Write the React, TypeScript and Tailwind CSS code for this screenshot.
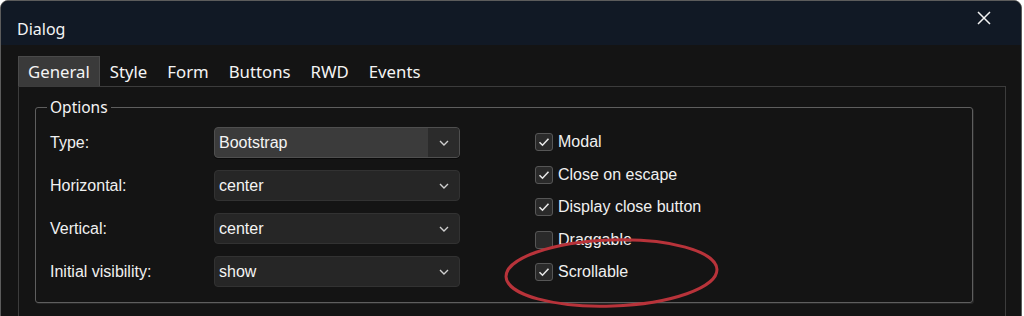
const tabs = ["General", "Style", "Form", "Buttons", "RWD", "Events"];

const selects = [
  { label: "Type:", value: "Bootstrap", focused: true },
  { label: "Horizontal:", value: "center" },
  { label: "Vertical:", value: "center" },
  { label: "Initial visibility:", value: "show" },
];

const options = [
  { label: "Modal", checked: true },
  { label: "Close on escape", checked: true },
  { label: "Display close button", checked: true },
  { label: "Draggable", checked: false },
  { label: "Scrollable", checked: true },
];

function Chevron() {
  return (
    <svg width="10" height="6" viewBox="0 0 10 6" fill="none">
      <path d="M1 1l4 4 4-4" stroke="#cfcfcf" strokeWidth="1.4" />
    </svg>
  );
}

function Select({ value, focused }: { value: string; focused?: boolean }) {
  if (focused) {
    return (
      <div className="flex h-[31px] w-[246px] overflow-hidden rounded-[4px] border border-[#4f4f4f] bg-[#3b3b3b] shadow-[0_1px_0_#0a0a0a]">
        <div className="flex flex-1 items-center pl-[4px] text-[#f4f4f4]">{value}</div>
        <div className="flex w-[31px] items-center justify-center bg-[#2b2b2b]">
          <Chevron />
        </div>
      </div>
    );
  }
  return (
    <div className="flex h-[31px] w-[246px] items-center justify-between rounded-[4px] border border-[#323232] bg-[#262626] pl-[4px] pr-[10px] text-[#f4f4f4]">
      <span>{value}</span>
      <Chevron />
    </div>
  );
}

function Checkbox({ checked }: { checked: boolean }) {
  return (
    <div className="flex h-[18px] w-[18px] items-center justify-center rounded-[3px] border border-[#565656] bg-[#2a2a2a]">
      {checked && (
        <svg width="12" height="10" viewBox="0 0 12 10" fill="none">
          <path d="M1.5 5.2l3 3 6-6.5" stroke="#e6e6e6" strokeWidth="1.6" />
        </svg>
      )}
    </div>
  );
}

export default function App() {
  return (
    <div className="relative h-[316px] overflow-hidden bg-white font-['Liberation_Sans',Arial,sans-serif] text-[16px]">
      {/* window */}
      <div className="flex h-[360px] w-[1022px] flex-col overflow-hidden rounded-t-[8px] border border-[#5c5c5c] bg-[#141414]">
        {/* title bar */}
        <div className="flex h-[44px] shrink-0 items-start justify-between bg-[#111925] pl-[16px] pr-[30px]">
          <span className="pt-[16px] font-['Noto_Sans',sans-serif] text-[16px] leading-[24px] text-[#f4f4f4]">Dialog</span>
          <svg className="mt-[10px]" width="14" height="14" viewBox="0 0 14 14" fill="none">
            <path d="M1 1l12 12M13 1L1 13" stroke="#f2f2f2" strokeWidth="1.5" />
          </svg>
        </div>

        {/* body */}
        <div className="flex flex-1 flex-col pl-[17px] pr-[15px] pt-[11px]">
          {/* tabs */}
          <div className="flex font-['Noto_Sans',sans-serif] text-[16.75px] text-[#f4f4f4]">
            {tabs.map((t, i) => (
              <div
                key={t}
                className={
                  i === 0
                    ? "h-[30px] border-x border-t border-[#4a4a4a] bg-[#3a3a3a] px-[9px] pt-[2px] leading-[26px]"
                    : "h-[30px] px-[10px] pt-[3px] leading-[26px]"
                }
              >
                {t}
              </div>
            ))}
          </div>

          {/* tab panel */}
          <div className="flex-1 border-x border-t border-[#3c3c3c]">
            <fieldset className="ml-[16px] mt-[11px] w-[938px] rounded-[3px] border border-[#5e5e5e] px-[14px] pb-[15px] pt-[11px] shadow-[1px_1px_0_#262626]">
              <legend className="-ml-[3px] px-[3px] font-['Noto_Sans',sans-serif] text-[15.5px] leading-[18px] text-[#f4f4f4]">
                Options
              </legend>
              <div className="flex text-[#f0f0f0]">
                <div className="flex flex-col gap-[12px]">
                  {selects.map((s) => (
                    <div key={s.label} className="flex h-[31px] items-center">
                      <span className="w-[164px]">{s.label}</span>
                      <Select value={s.value} focused={s.focused} />
                    </div>
                  ))}
                </div>
                <div className="ml-[75px] flex flex-col gap-[14.5px] pt-[6px]">
                  {options.map((o) => (
                    <div key={o.label} className="flex h-[18px] items-center gap-[5px] leading-[18px]">
                      <Checkbox checked={o.checked} />
                      <span>{o.label}</span>
                    </div>
                  ))}
                </div>
              </div>
            </fieldset>
          </div>
        </div>
      </div>

      {/* red annotation ring */}
      <svg className="pointer-events-none absolute left-[500px] top-[235px]" width="224" height="76" viewBox="0 0 224 76" fill="none">
        <ellipse cx="111.5" cy="38" rx="105.5" ry="33" transform="rotate(-2 111.5 38)" stroke="#b8333a" strokeWidth="3" />
      </svg>
    </div>
  );
}
